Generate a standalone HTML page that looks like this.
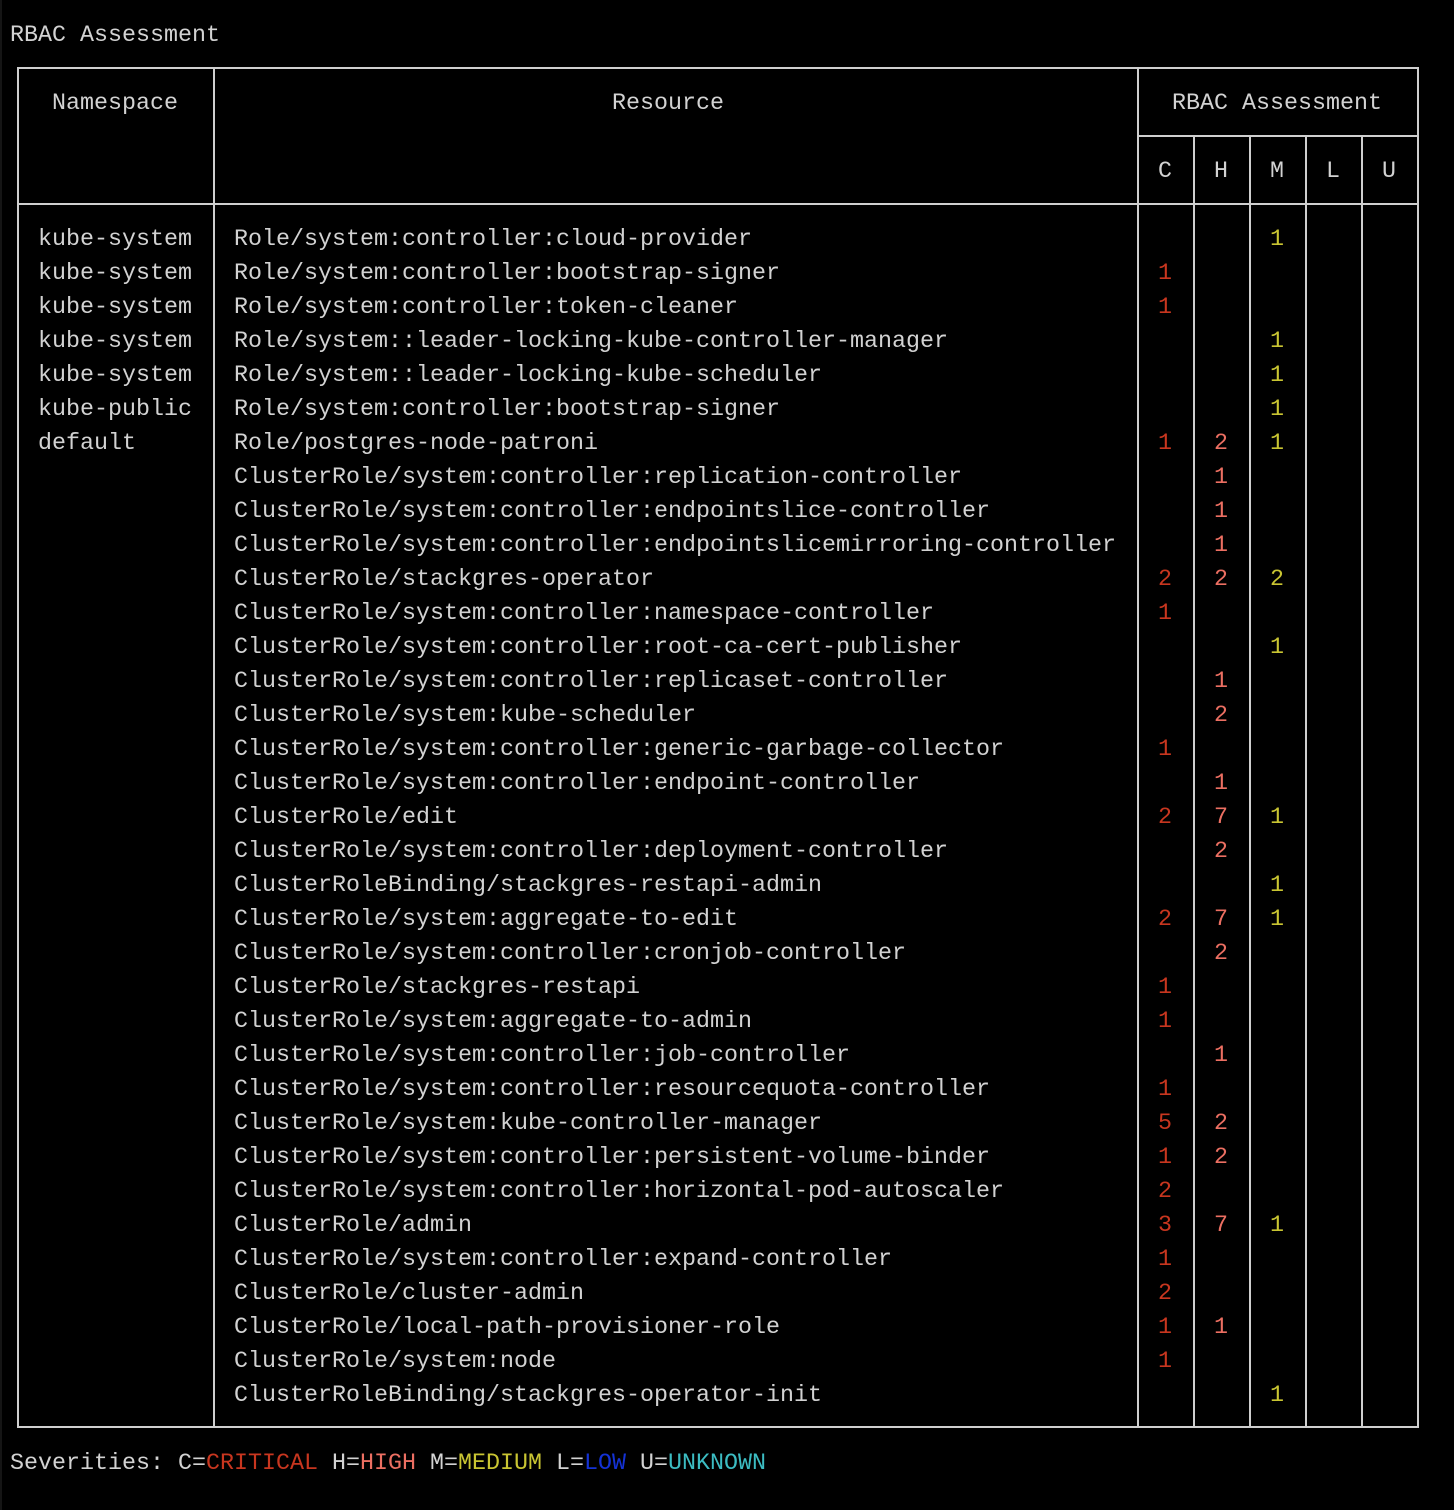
<!DOCTYPE html>
<html><head><meta charset="utf-8"><style>
html,body{margin:0;padding:0;background:#000;}
body{width:1454px;height:1510px;position:relative;overflow:hidden;font-family:"Liberation Mono",monospace;font-size:23.33px;color:#d2d2d2;}
.t{position:absolute;white-space:pre;line-height:34px;height:34px;margin-top:3px;}
.h{position:absolute;background:#cfcfcf;height:2px;}
.v{position:absolute;background:#cfcfcf;width:2px;}
.c{color:#c8361f}.hi{color:#ec6f62}.m{color:#c9c532}.l{color:#1432d6}.u{color:#3cbcc2}
.n{position:absolute;width:56px;text-align:center;line-height:34px;margin-top:3px;}
</style></head><body>
<div style="position:absolute;left:0;top:0;width:2px;height:1510px;background:#151515"></div>
<div class="t" style="left:10px;top:16px">RBAC Assessment</div>
<div class="h" style="left:17px;top:67px;width:1402px"></div>
<div class="h" style="left:1138px;top:135px;width:281px"></div>
<div class="h" style="left:17px;top:203px;width:1402px"></div>
<div class="h" style="left:17px;top:1426px;width:1402px"></div>
<div class="v" style="left:17px;top:67px;height:1361px"></div>
<div class="v" style="left:213px;top:67px;height:1361px"></div>
<div class="v" style="left:1137px;top:67px;height:1361px"></div>
<div class="v" style="left:1193px;top:135px;height:1293px"></div>
<div class="v" style="left:1249px;top:135px;height:1293px"></div>
<div class="v" style="left:1305px;top:135px;height:1293px"></div>
<div class="v" style="left:1361px;top:135px;height:1293px"></div>
<div class="v" style="left:1417px;top:67px;height:1361px"></div>
<div class="t" style="left:52px;top:84px">Namespace</div>
<div class="t" style="left:612px;top:84px">Resource</div>
<div class="t" style="left:1172px;top:84px">RBAC Assessment</div>
<div class="n" style="left:1137px;top:152px">C</div>
<div class="n" style="left:1193px;top:152px">H</div>
<div class="n" style="left:1249px;top:152px">M</div>
<div class="n" style="left:1305px;top:152px">L</div>
<div class="n" style="left:1361px;top:152px">U</div>
<div id="rows"></div>
<div class="t" style="left:10px;top:1444px">Severities: C=<span class="c">CRITICAL</span> H=<span class="hi">HIGH</span> M=<span class="m">MEDIUM</span> L=<span class="l">LOW</span> U=<span class="u">UNKNOWN</span></div>
<script>
var R=[
["kube-system","Role/system:controller:cloud-provider","","","1"],
["kube-system","Role/system:controller:bootstrap-signer","1","",""],
["kube-system","Role/system:controller:token-cleaner","1","",""],
["kube-system","Role/system::leader-locking-kube-controller-manager","","","1"],
["kube-system","Role/system::leader-locking-kube-scheduler","","","1"],
["kube-public","Role/system:controller:bootstrap-signer","","","1"],
["default","Role/postgres-node-patroni","1","2","1"],
["","ClusterRole/system:controller:replication-controller","","1",""],
["","ClusterRole/system:controller:endpointslice-controller","","1",""],
["","ClusterRole/system:controller:endpointslicemirroring-controller","","1",""],
["","ClusterRole/stackgres-operator","2","2","2"],
["","ClusterRole/system:controller:namespace-controller","1","",""],
["","ClusterRole/system:controller:root-ca-cert-publisher","","","1"],
["","ClusterRole/system:controller:replicaset-controller","","1",""],
["","ClusterRole/system:kube-scheduler","","2",""],
["","ClusterRole/system:controller:generic-garbage-collector","1","",""],
["","ClusterRole/system:controller:endpoint-controller","","1",""],
["","ClusterRole/edit","2","7","1"],
["","ClusterRole/system:controller:deployment-controller","","2",""],
["","ClusterRoleBinding/stackgres-restapi-admin","","","1"],
["","ClusterRole/system:aggregate-to-edit","2","7","1"],
["","ClusterRole/system:controller:cronjob-controller","","2",""],
["","ClusterRole/stackgres-restapi","1","",""],
["","ClusterRole/system:aggregate-to-admin","1","",""],
["","ClusterRole/system:controller:job-controller","","1",""],
["","ClusterRole/system:controller:resourcequota-controller","1","",""],
["","ClusterRole/system:kube-controller-manager","5","2",""],
["","ClusterRole/system:controller:persistent-volume-binder","1","2",""],
["","ClusterRole/system:controller:horizontal-pod-autoscaler","2","",""],
["","ClusterRole/admin","3","7","1"],
["","ClusterRole/system:controller:expand-controller","1","",""],
["","ClusterRole/cluster-admin","2","",""],
["","ClusterRole/local-path-provisioner-role","1","1",""],
["","ClusterRole/system:node","1","",""],
["","ClusterRoleBinding/stackgres-operator-init","","","1"]];
var h="";
R.forEach(function(r,i){var y=220+i*34;
if(r[0])h+='<div class="t" style="left:38px;top:'+y+'px">'+r[0]+'</div>';
h+='<div class="t" style="left:234px;top:'+y+'px">'+r[1]+'</div>';
if(r[2])h+='<div class="n c" style="left:1137px;top:'+y+'px">'+r[2]+'</div>';
if(r[3])h+='<div class="n hi" style="left:1193px;top:'+y+'px">'+r[3]+'</div>';
if(r[4])h+='<div class="n m" style="left:1249px;top:'+y+'px">'+r[4]+'</div>';
});
document.getElementById("rows").innerHTML=h;
</script>
</body></html>
